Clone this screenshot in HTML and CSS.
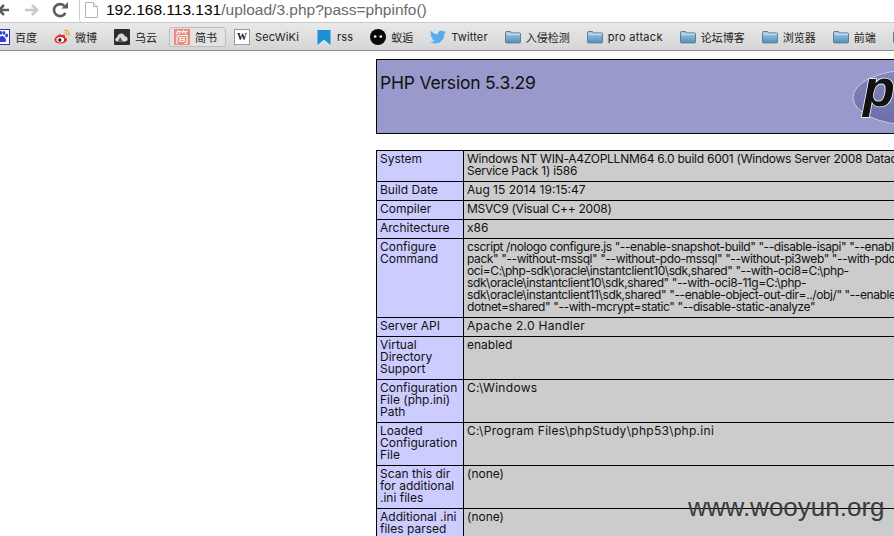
FILE: index.html
```html
<!DOCTYPE html>
<html lang="zh">
<head>
<meta charset="utf-8">
<title>phpinfo()</title>
<link rel="stylesheet" href="styles.css">
</head>
<body>
<svg class="defs" width="0" height="0" aria-hidden="true">
  <defs>
    <linearGradient id="fg" x1="0" y1="0" x2="0" y2="1">
      <stop offset="0" stop-color="#a9cde6"/>
      <stop offset="1" stop-color="#4f8fbd"/>
    </linearGradient>
    <linearGradient id="lg" x1="0" y1="0" x2="0" y2="1">
      <stop offset="0" stop-color="#8487bd"/>
      <stop offset="1" stop-color="#6a6ea8"/>
    </linearGradient>
    <symbol id="folder" viewBox="0 0 16 16">
      <path d="M.5 3.5q0-1 1-1h4l1.200 1.400h7.800q1 0 1 1v8q0 1-1 1h-13q-1 0-1-1z" fill="url(#fg)" stroke="#5a7d99"/>
      <path d="M1 5.200h14" stroke="#d6e8f4"/>
    </symbol>
  </defs>
</svg>
<header class="chrome">
  <div class="nav">
    <svg class="nav-back" width="16" height="16" viewBox="0 0 16 16"><path d="M14 8H4M9 3L4 8l5 5" fill="none" stroke="#5c5c5c" stroke-width="2.600"/></svg>
    <svg class="nav-fwd" width="16" height="16" viewBox="0 0 16 16"><path d="M1 8h12M8 3l5 5-5 5" fill="none" stroke="#c8c8c8" stroke-width="2.600"/></svg>
    <svg class="nav-reload" width="16" height="16" viewBox="0 0 16 16"><path d="M13.400 10.800A6 6 0 1 1 12.200 3.800" fill="none" stroke="#5c5c5c" stroke-width="2.600"/><path d="M9.500 6.500H16V0z" fill="#5c5c5c"/></svg>
    <div class="omnibox">
      <svg class="page-icon" width="13" height="16" viewBox="0 0 13 16"><path d="M.5.5h8l4 4v11H.5z" fill="#fff" stroke="#b4b4b4"/><path d="M8.500.5v4h4" fill="#eee" stroke="#b4b4b4"/></svg>
      <span class="url"><span class="host">192.168.113.131</span>/upload/3.php?pass=phpinfo()</span>
    </div>
  </div>
  <nav class="bookmarks">
    <a class="bm">
      <svg class="ico" viewBox="0 0 16 16"><rect x=".5" y=".5" width="15" height="15" fill="#fff" stroke="#2b33c4"/><g fill="#2d3fd8"><ellipse cx="4" cy="6" rx="1.500" ry="2"/><ellipse cx="7" cy="3.800" rx="1.400" ry="1.900"/><ellipse cx="10" cy="3.800" rx="1.400" ry="1.900"/><ellipse cx="12.600" cy="6.500" rx="1.400" ry="1.900"/><path d="M8 7c-2 0-4.600 3-4 5 .5 1.500 2.500 1 4 1s3.500.5 4-1c.6-2-2-5-4-5z"/></g></svg>
      <span>百度</span>
    </a>
    <a class="bm">
      <svg class="ico" viewBox="0 0 16 16"><path d="M6.800 5C3.500 6 .5 8.500.5 10.800c0 2.400 3 3.700 6 3.700 3.800 0 6.500-2 6.500-4 0-1.300-1.100-1.700-2-2 .5-1.600-.2-3-2-2.800-.8.100-1.600.4-2.200.800z" fill="#e2282c"/><ellipse cx="6.300" cy="10.800" rx="3.800" ry="2.700" fill="#fff"/><circle cx="5.800" cy="11" r="1.700" fill="#222"/><path d="M10.500 1.500c3-.5 5 2 4.300 5M10.800 4c1.500-.2 2 1 1.800 2" fill="none" stroke="#f0a020" stroke-width="1.300"/></svg>
      <span>微博</span>
    </a>
    <a class="bm">
      <svg class="ico" viewBox="0 0 16 16"><rect width="16" height="16" rx="1" fill="#2c2c2c"/><path d="M3 12.500c-2 0-2.500-3.500 0-4 .5-2.500 2.500-4.500 5-4 1.500.3 2.500 1.500 2.800 2.800 3-.2 4.200 4.700.7 5.200z" fill="#d8d8d8"/><path d="M6 8l3 4.500H4z" fill="#555"/></svg>
      <span>乌云</span>
    </a>
    <a class="bm bm-active">
      <span class="ico ico-jian">简</span>
      <span>简书</span>
    </a>
    <a class="bm">
      <span class="ico ico-w">W</span>
      <span class="lat">SecWiKi</span>
    </a>
    <a class="bm">
      <svg class="ico" viewBox="0 0 16 16"><path d="M1.500 1h13v15L8 10.500 1.500 16z" fill="#1a8fd6"/></svg>
      <span class="lat">rss</span>
    </a>
    <a class="bm">
      <svg class="ico" viewBox="0 0 16 16"><circle cx="8" cy="8" r="8" fill="#080808"/><circle cx="5.200" cy="7.500" r="1.300" fill="#fff"/><circle cx="10.800" cy="7.500" r="1.300" fill="#fff"/></svg>
      <span>蚁逅</span>
    </a>
    <a class="bm">
      <svg class="ico" viewBox="0 0 24 24"><path d="M23.950 4.570a10 10 0 0 1-2.820.77 4.960 4.960 0 0 0 2.160-2.720c-.95.55-2 .96-3.120 1.180a4.920 4.920 0 0 0-8.380 4.480C7.690 8.090 4.070 6.130 1.640 3.160a4.820 4.820 0 0 0-.66 2.470c0 1.710.87 3.210 2.190 4.100a4.900 4.900 0 0 1-2.230-.61v.06a4.920 4.920 0 0 0 3.950 4.830 4.900 4.900 0 0 1-2.210.08 4.940 4.940 0 0 0 4.600 3.420A9.870 9.870 0 0 1 0 19.540a13.940 13.940 0 0 0 7.550 2.210c9.050 0 14-7.500 14-13.980 0-.21 0-.42-.02-.63a9.940 9.940 0 0 0 2.460-2.550z" fill="#55acee"/></svg>
      <span class="lat">Twitter</span>
    </a>
    <a class="bm"><svg class="ico"><use href="#folder"/></svg><span>入侵检测</span></a>
    <a class="bm"><svg class="ico"><use href="#folder"/></svg><span class="lat-wide">pro attack</span></a>
    <a class="bm"><svg class="ico"><use href="#folder"/></svg><span>论坛博客</span></a>
    <a class="bm"><svg class="ico"><use href="#folder"/></svg><span>浏览器</span></a>
    <a class="bm"><svg class="ico"><use href="#folder"/></svg><span>前端</span></a>
    <a class="bm"><svg class="ico"><use href="#folder"/></svg></a>
  </nav>
</header>
<main class="page">
  <table class="info head">
    <tr>
      <td class="head-cell">
        <svg class="php-logo" width="120" height="67" viewBox="0 0 120 67">
          <ellipse cx="60" cy="34.500" rx="59" ry="27.500" fill="url(#lg)" stroke="#c9cbe6"/>
          <text class="php-letters" x="11" y="43">php</text>
        </svg>
        <h1 class="title">PHP Version 5.3.29</h1>
      </td>
    </tr>
  </table>
  <table class="info details">
    <colgroup><col class="col-e"><col></colgroup>
    <tr><td class="e">System</td><td class="v v-sys">Windows NT WIN-A4ZOPLLNM64 6.0 build 6001 (Windows Server 2008 Datacenter Edition<br>Service Pack 1) i586</td></tr>
    <tr><td class="e">Build Date</td><td class="v">Aug 15 2014 19:15:47</td></tr>
    <tr><td class="e">Compiler</td><td class="v v-narrow">MSVC9 (Visual C++ 2008)</td></tr>
    <tr><td class="e">Architecture</td><td class="v">x86</td></tr>
    <tr><td class="e">Configure<br>Command</td><td class="v v-cmd">cscript /nologo configure.js "--enable-snapshot-build" "--disable-isapi" "--enable-debug-<br>pack" "--without-mssql" "--without-pdo-mssql" "--without-pi3web" "--with-pdo-<br>oci=C:\php-sdk\oracle\instantclient10\sdk,shared" "--with-oci8=C:\php-<br>sdk\oracle\instantclient10\sdk,shared" "--with-oci8-11g=C:\php-<br>sdk\oracle\instantclient11\sdk,shared" "--enable-object-out-dir=../obj/" "--enable-com-<br>dotnet=shared" "--with-mcrypt=static" "--disable-static-analyze"</td></tr>
    <tr><td class="e">Server API</td><td class="v v-wide">Apache 2.0 Handler</td></tr>
    <tr><td class="e">Virtual<br>Directory<br>Support</td><td class="v">enabled</td></tr>
    <tr><td class="e">Configuration<br>File (php.ini)<br>Path</td><td class="v v-wide">C:\Windows</td></tr>
    <tr><td class="e">Loaded<br>Configuration<br>File</td><td class="v v-wide">C:\Program Files\phpStudy\php53\php.ini</td></tr>
    <tr><td class="e">Scan this dir<br>for additional<br>.ini files</td><td class="v">(none)</td></tr>
    <tr><td class="e">Additional .ini<br>files parsed</td><td class="v">(none)</td></tr>
  </table>
</main>
<div class="watermark">www.wooyun.org</div>
</body>
</html>
```
FILE: styles.css
```css
html, body {
  margin: 0;
  padding: 0;
  height: 536px;
  overflow: hidden;
  background: #fff;
}
body {
  position: relative;
  font-family: Inter, "Noto Sans CJK SC", sans-serif;
}
.defs { display: block; height: 0; }

/* browser chrome */
.nav {
  height: 22px;
  display: flex;
  align-items: center;
  background: #fff;
}
.nav svg { flex: none; }
.nav-back { margin-left: -5px; margin-top: -3px; }
.nav-fwd { margin-left: 13px; margin-top: -3px; }
.nav-reload { margin-left: 12px; margin-top: -3px; }
.omnibox {
  margin-left: 11px;
  flex: 1;
  height: 22px;
  box-sizing: border-box;
  border-left: 1px solid #ccc;
  border-bottom-left-radius: 3px;
  display: flex;
  align-items: center;
  padding-left: 5px;
}
.page-icon { margin-top: -2px; }
.url {
  margin-left: 8px;
  margin-top: -3px;
  font: 15.5px/18px "Liberation Sans", sans-serif;
  color: #6a6a6a;
  white-space: nowrap;
}
.host { color: #000; }

.bookmarks {
  height: 27px;
  border-top: 1px solid #c9c9c9;
  border-bottom: 1px solid #8a8a8a;
  background: linear-gradient(#e9e9e9, #d5d5d5);
  display: flex;
  align-items: center;
  gap: 3px;
  overflow: hidden;
}
.bm {
  flex: none;
  height: 20px;
  box-sizing: border-box;
  border: 1px solid transparent;
  border-radius: 3px;
  padding: 0 8px 0 4px;
  display: flex;
  align-items: center;
  gap: 5px;
  font-size: 11px;
  color: #222;
  white-space: nowrap;
}
.bm:first-child { margin-left: -11px; }
.lat { letter-spacing: .15px; }
.lat-wide { letter-spacing: .3px; }
.bm-active {
  border-color: #bdbdbd;
  background: #e3e3e3;
}
.ico {
  flex: none;
  display: block;
  width: 16px;
  height: 16px;
}
.ico-jian {
  background: #ea8a78;
  color: #fff;
  font-size: 14px;
  line-height: 16px;
  text-align: center;
}
.ico-w {
  box-sizing: border-box;
  background: #fff;
  border: 1px solid #9a9a9a;
  color: #222;
  font: bold 10px/14px "Liberation Serif", serif;
  text-align: center;
}

/* phpinfo page */
.page {
  padding: 8px 0 0 376px;
  width: 600px;
}
.info {
  border-collapse: collapse;
  width: 600px;
  table-layout: fixed;
  font-size: 12px;
  line-height: 12px;
  color: #111;
}
.info td {
  border: 1px solid #000;
  padding: 2px 3px 4px;
  vertical-align: top;
}
.head { margin-bottom: 16px; }
.info .head-cell { background: #99c; padding: 3px; }
.php-logo { float: right; display: block; }
.php-letters {
  font: italic bold 52px "Liberation Sans", sans-serif;
  fill: #111;
  stroke: #fff;
  stroke-width: 1.500px;
  paint-order: stroke;
}
.title {
  margin: 8px 0 0;
  font-size: 17.5px;
  line-height: 24px;
  font-weight: 400;
  letter-spacing: -.2px;
}
.col-e { width: 87px; }
.e { background: #ccf; white-space: nowrap; }
.v { background: #ccc; white-space: nowrap; overflow: hidden; }
.v-sys { letter-spacing: -.25px; }
.v-cmd { letter-spacing: -.4px; }
.v-narrow { letter-spacing: -.25px; }
.v-wide { letter-spacing: .3px; }

.watermark {
  position: absolute;
  left: 688px;
  top: 492px;
  font: 26px/30px "Liberation Sans", sans-serif;
  color: #3c3c3c;
  white-space: nowrap;
}
```
